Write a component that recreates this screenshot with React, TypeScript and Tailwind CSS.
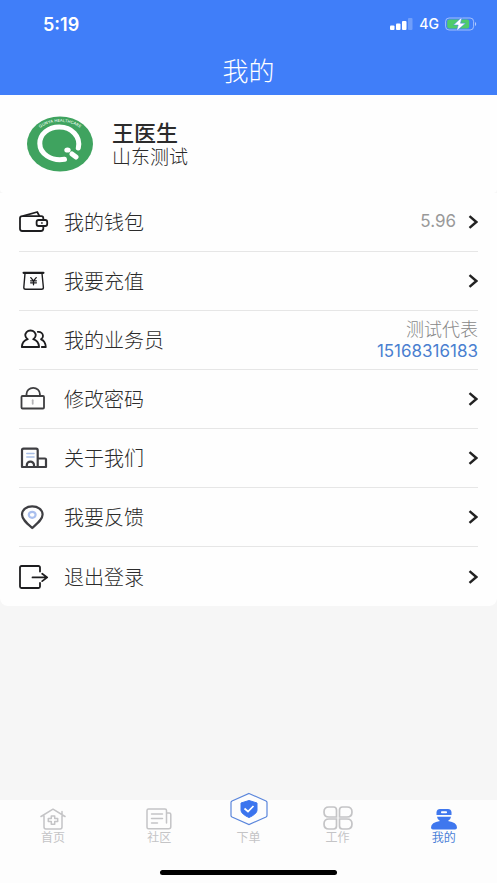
import type { ReactNode } from "react";

const Chevron = () => (
  <svg width="10" height="14" viewBox="0 0 10 14" fill="none" stroke="#222" strokeWidth="2.4" aria-hidden="true">
    <path d="M1.5 1.2 8.3 7l-6.8 5.8" />
  </svg>
);

interface IconProps {
  children: ReactNode;
  color?: string;
  width?: number;
}

const Icon = ({ children, color = "#1d1d1f", width = 1.8 }: IconProps) => (
  <svg
    width="30"
    height="30"
    viewBox="0 0 30 30"
    fill="none"
    stroke={color}
    strokeWidth={width}
    strokeLinecap="round"
    strokeLinejoin="round"
    className="shrink-0"
    aria-hidden="true"
  >
    {children}
  </svg>
);

const WalletIcon = () => (
  <Icon>
    <path d="M24.3 12.8v-1.6a2 2 0 0 0-2-2H3.2a2.2 2.2 0 0 0-2.2 2v10.6a2.2 2.2 0 0 0 2.2 2.2h18.6a2.5 2.5 0 0 0 2.5-2.2v-2.2" />
    <path d="M4.5 8.8 18.2 5l2 3.6" />
    <rect x="17.6" y="13" width="10.6" height="6" rx="2" />
    <path d="M22.6 16h.6" strokeWidth="1.4" />
  </Icon>
);

const RechargeIcon = () => (
  <Icon width={1.4}>
    <path d="M4.6 6.8h19.8" strokeWidth="2.2" />
    <path d="M6 7.5 4.8 21.5q0 1.8 1.8 1.8h16q1.8 0 1.8-1.8L23 7.5" />
    <path d="m11.8 11.6 2.7 3.2 2.7-3.2M11.6 14.8h5.8M11.6 16.8h5.8M14.5 14.8v4" strokeWidth="1.3" />
  </Icon>
);

const UsersIcon = () => (
  <Icon width={1.8}>
    <path d="M8.8 14.2a5.2 4.7 0 1 1 5.4 0c3.2.9 5.600 3.6 5.9 7.800H2.800c.3-4.200 2.800-6.900 6-7.800Z" />
    <path d="M18.800 6.900c3-.5 5.200 1.600 5.200 4.100 0 1.500-.8 2.500-2 3.300 2.800.9 4.500 3.700 4.800 7.700h-4" />
  </Icon>
);

const LockIcon = () => (
  <Icon color="#3e3e40">
    <rect x="2.5" y="12" width="22.5" height="12.5" rx="1" />
    <path d="M7.5 11.5V10a6.700 6.200 0 0 1 13.400 0v1.500" />
    <path d="M13.700 16.200v3.600" stroke="#b5b5b8" />
  </Icon>
);

const OfficeIcon = () => (
  <Icon color="#3e3e42" width={2.2}>
    <path d="M3 24V7.200a1.500 1.500 0 0 1 1.500-1.500h12.700a1.500 1.500 0 0 1 1.500 1.500V24ZM18.700 15.500H26a1 1 0 0 1 1 1V24h-8.300" />
    <path d="M7.800 23.500v-1.600a3.600 3.200 0 0 1 7.200 0v1.600" />
    <path d="M7.800 10.400H15M7.800 14H15" stroke="#a9bfe6" strokeWidth="1.500" />
  </Icon>
);

const PinIcon = () => (
  <Icon color="#3e3e42" width={2.2}>
    <path d="M13.200 26C8 21.500 3 17.500 3 12.600 3 7.700 7.500 4.400 13.200 4.400s10.400 3.300 10.400 8.200c0 4.900-5.200 8.900-10.400 13.400Z" />
    <ellipse cx="13.200" cy="12.800" rx="3.400" ry="3" stroke="#a9bfee" />
  </Icon>
);

const LogoutIcon = () => (
  <Icon>
    <path d="M21 9.500V5.500A1.500 1.500 0 0 0 19.500 4H2.500A1.500 1.500 0 0 0 1 5.500v19A1.500 1.500 0 0 0 2.500 26h17a1.500 1.500 0 0 0 1.500-1.500V21" />
    <path d="M13.500 15.400h14.300M23.200 11.700l5 3.700-5 3.700" />
  </Icon>
);

const items = [
  { label: "我的钱包", icon: <WalletIcon />, value: "5.96" },
  { label: "我要充值", icon: <RechargeIcon /> },
  { label: "我的业务员", icon: <UsersIcon />, contact: { name: "测试代表", phone: "15168316183" } },
  { label: "修改密码", icon: <LockIcon /> },
  { label: "关于我们", icon: <OfficeIcon /> },
  { label: "我要反馈", icon: <PinIcon /> },
  { label: "退出登录", icon: <LogoutIcon /> },
];

const StatusBar = () => (
  <div className="flex h-12 items-center justify-between pl-[43px] pr-5 text-white">
    <span className="pt-[2px] text-lg font-semibold">5:19</span>
    <div className="flex items-center gap-[6px]">
      <svg width="23" height="12" viewBox="0 0 23 12" fill="#fff" aria-hidden="true">
        <rect x="0" y="7.500" width="4.500" height="4.500" rx="1" />
        <rect x="6" y="5.500" width="4.500" height="6.500" rx="1" />
        <rect x="12" y="3" width="4.500" height="9" rx="1" />
        <rect x="18" y="0" width="4.500" height="12" rx="1" opacity=".25" />
      </svg>
      <span className="text-sm font-medium">4G</span>
      <svg width="32" height="14" viewBox="0 0 32 14" aria-hidden="true">
        <rect x=".6" y="1" width="28" height="12" rx="3.500" fill="none" stroke="#fff" strokeOpacity=".5" />
        <rect x="2.200" y="2.600" width="22" height="8.800" rx="2" fill="#4fcb6b" />
        <path d="M30 5v4c1.600-.6 1.600-3.400 0-4Z" fill="#fff" opacity=".6" />
        <path d="M17 0 8.500 8h4.700l-1.700 6 9-7.800h-5Z" fill="#fff" stroke="#3f7cf8" strokeWidth=".5" />
      </svg>
    </div>
  </div>
);

const Logo = () => (
  <svg width="66" height="56" viewBox="0 0 66 56" role="img" aria-label="头像" className="shrink-0">
    <defs>
      <path id="logo-arc" d="M12 13C22 3.500 44 3.500 54 13" />
    </defs>
    <ellipse cx="33" cy="28" rx="33" ry="27.500" fill="#3fa35f" />
    <text fontSize="4" fontWeight="600" fill="#d9f0df">
      <textPath href="#logo-arc" startOffset="50%" textAnchor="middle">
        QUNYA HEALTHCARE
      </textPath>
    </text>
    <path
      d="M37.500 43.300C24 45.500 12.800 37.500 12.800 27.500 12.800 18 21.500 11 32.300 11 44.500 11 54 20.500 51.300 32"
      fill="none"
      stroke="#fff"
      strokeWidth="5"
      strokeLinecap="round"
    />
    <ellipse cx="40.500" cy="34" rx="3.200" ry="2.600" fill="#fff" />
    <path d="m45 38 4 3" stroke="#fff" strokeWidth="5" strokeLinecap="round" />
  </svg>
);

const tabs = [
  {
    label: "首页",
    icon: (
      <svg width="26" height="22" viewBox="0 0 26 22" fill="none" stroke="#c4c4c6" strokeWidth="1.5" strokeLinecap="round" strokeLinejoin="round">
        <path d="M1 8.500 13 1.200l12 7.300M4 7.500V19a2 2 0 0 0 2 2h14a2 2 0 0 0 2-2V7.500M22 6V3.500" />
        <path d="M11.300 8h3.400v2.600h3v3h-3v2.700h-3.400v-2.700h-3v-3h3Z" />
      </svg>
    ),
  },
  {
    label: "社区",
    icon: (
      <svg width="26" height="22" viewBox="0 0 26 22" fill="none" stroke="#c4c4c6" strokeWidth="1.5" strokeLinecap="round" strokeLinejoin="round">
        <path d="M20.500 15V2.500A1.500 1.500 0 0 0 19 1H2.500A1.500 1.500 0 0 0 1 2.500v16.800a1.500 1.500 0 0 0 1.500 1.500h20.300a2 2 0 0 0 2-2V6.500A1.500 1.500 0 0 0 23.300 5h-2.800" />
        <path d="M5.500 6h11M5.500 10.500h11M5.500 15h6" />
      </svg>
    ),
  },
  {
    label: "下单",
    center: true,
    icon: (
      <svg width="38" height="34" viewBox="0 0 38 34" fill="none">
        <path d="M19 1.500 36 9q1 .5 1 1.500v13q0 1-1 1.500l-17 7.500L2 25q-1-.5-1-1.500v-13Q1 9.500 2 9Z" fill="#fdfdfd" stroke="#5a86dc" strokeWidth="1.2" />
        <path d="m19 8.500 8 2.500v7c0 3-3.500 5.500-8 7.500-4.500-2-8-4.500-8-7.500v-7Z" fill="#3b74ee" stroke="#3b74ee" strokeLinejoin="round" />
        <path d="m14.500 16.500 3.500 3 5.500-5.500" stroke="#fff" strokeWidth="1.7" />
      </svg>
    ),
  },
  {
    label: "工作",
    icon: (
      <svg width="30" height="24" viewBox="0 0 30 24" fill="none" stroke="#c4c4c6" strokeWidth="1.7">
        <path d="M6 1h4.500q3 0 3 3v7H6q-5 0-5-5t5-5ZM24 1h-4.500q-3 0-3 3v7H24q5 0 5-5t-5-5ZM6 23h4.500q3 0 3-3v-7H6q-5 0-5 5t5 5ZM24 23h-4.500q-3 0-3-3v-7H24q5 0 5 5t-5 5Z" />
      </svg>
    ),
  },
  {
    label: "我的",
    active: true,
    icon: (
      <svg width="26" height="22" viewBox="0 0 26 22" fill="#3f77ee">
        <path d="M5.500 7V4Q6 1 9 1h8q3 0 3.500 3v3ZM6 8.800h14q-.2 2.700-3 4.200 9 1.300 9 6.500 0 2-2 2H2q-2 0-2-2 0-5.200 9-6.500-2.800-1.500-3-4.200Z" />
        <rect x="10" y="3.200" width="6" height="2" rx=".8" fill="#fff" />
      </svg>
    ),
  },
];

export default function App() {
  return (
    <div className="flex min-h-screen flex-col bg-[#f6f6f6] font-[Inter,'Noto_Sans_CJK_SC',sans-serif] text-[#2b2b2b]">
      <header className="bg-[#407ef9]">
        <StatusBar />
        <h1 className="flex h-[47px] items-center justify-center text-[26px] font-light text-white">我的</h1>
      </header>

      <section className="flex h-[98px] items-center gap-[19px] rounded-b-sm bg-[#fefefe] px-[27px]">
        <Logo />
        <div className="pt-[2px]">
          <p className="text-[22px] leading-[26px] font-medium">王医生</p>
          <p className="text-[19px] leading-6 font-light">山东测试</p>
        </div>
      </section>

      <ul className="rounded-b-lg bg-[#fefefe] px-[19px]">
        {items.map(({ label, icon, value, contact }) => (
          <li key={label} className="flex h-[59px] items-center border-b border-[#e6e6e6] last:border-b-0">
            {contact ? (
              <>
                {icon}
                <span className="ml-[15px] flex-1 pt-[2px] text-xl font-light">{label}</span>
                <div className="text-right">
                  <p className="text-lg leading-[22px] font-light text-[#888]">{contact.name}</p>
                  <a href={`tel:${contact.phone}`} className="block text-[17px] leading-5 text-[#4a7fd0]">
                    {contact.phone}
                  </a>
                </div>
              </>
            ) : (
              <button type="button" className="flex h-full flex-1 items-center text-left">
                {icon}
                <span className="ml-[15px] flex-1 pt-[2px] text-xl font-light">{label}</span>
                {value && <span className="mr-3 text-[17px] text-[#999]">{value}</span>}
                <Chevron />
              </button>
            )}
          </li>
        ))}
      </ul>

      <footer className="mt-auto bg-[#fdfdfd]">
        <nav className="flex h-[70px] items-start">
          {tabs.map(({ label, icon, center, active }) => (
            <button
              key={label}
              type="button"
              className={`flex flex-col items-center text-xs leading-4 ${center ? "w-[72px]" : "flex-1"} ${active ? "text-[#4a7fd8]" : "text-[#c4c4c6]"}`}
            >
              <span className={center ? "-mt-2 flex h-[38px] items-start" : "flex h-[30px] items-end"}>{icon}</span>
              {label}
            </button>
          ))}
        </nav>
        <div className="mx-auto mb-2 h-[5px] w-[177px] rounded-full bg-black" />
      </footer>
    </div>
  );
}
